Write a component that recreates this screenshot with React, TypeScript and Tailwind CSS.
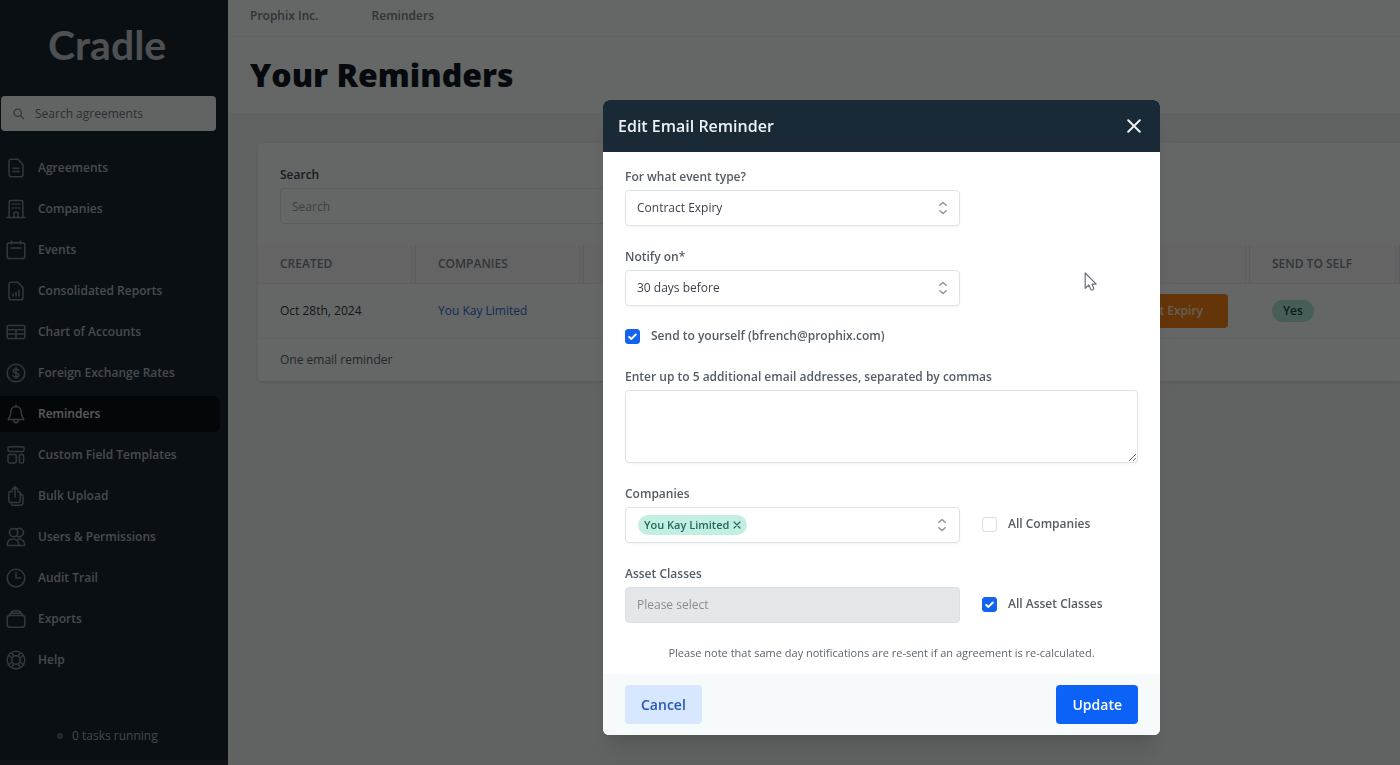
import { useState } from 'react'
import type { ReactNode } from 'react'

const icons: Record<string, ReactNode> = {
  agreements: (
    <>
      <path d="M3 3.4A2.2 2.2 0 0 1 5.2 1.2H12L17 6.8V16.4A2.4 2.4 0 0 1 14.6 18.8H5.2A2.2 2.2 0 0 1 3 16.6Z" />
      <path d="M7 10.2H13M7 13.4H13" />
    </>
  ),
  companies: (
    <>
      <path d="M3.2 18.5V3A1.6 1.6 0 0 1 4.800 1.4H15.2A1.6 1.6 0 0 1 16.8 3V18.5M1 18.6H19" />
      <path d="M8 18.5V14.2A1 1 0 0 1 9 13.2H11A1 1 0 0 1 12 14.2V18.5" />
      <path d="M6.5 5H7.5M9.5 5H10.5M12.5 5H13.5M6.5 9H7.5M12.5 9H13.5M9.5 9H10.5" />
    </>
  ),
  events: (
    <>
      <rect x="1.2" y="2.8" width="17.6" height="15.8" rx="2.4" />
      <path d="M5.5 1V4M14.5 1V4M5 8H15" />
    </>
  ),
  reports: (
    <>
      <path d="M3 3.4A2.2 2.2 0 0 1 5.2 1.2H12L17 6.8V16.4A2.4 2.4 0 0 1 14.6 18.8H5.2A2.2 2.2 0 0 1 3 16.6Z" />
      <path d="M7 15V13M10 15V11.5M13 15V9.5" />
    </>
  ),
  accounts: (
    <>
      <rect x="1.2" y="3.6" width="17.6" height="12.8" rx="1.4" />
      <path d="M1.2 7.8H18.8M1.2 12.1H18.8M10 7.8V16.4" />
    </>
  ),
  exchange: (
    <>
      <circle cx="10" cy="10" r="8.8" />
      <path d="M12.7 7.3C12.2 6.3 11.2 5.9 10 5.9C8.4 5.9 7.2 6.7 7.2 7.9C7.2 10.8 12.9 9.2 12.9 12.1C12.9 13.4 11.6 14.2 10 14.2C8.5 14.2 7.4 13.6 7 12.5M10 4.5V15.6" />
    </>
  ),
  reminders: (
    <>
      <path d="M10 2.6C6.8 2.6 4.7 5 4.7 8.2C4.7 12 3.5 13.2 2.2 15.4H17.8C16.5 13.2 15.3 12 15.3 8.2C15.3 5 13.2 2.6 10 2.6ZM10 2.6V1" />
      <path d="M7.6 15.6C7.6 17.6 8.6 18.8 10 18.8C11.4 18.8 12.4 17.6 12.4 15.6" />
    </>
  ),
  templates: (
    <>
      <rect x="2" y="1.8" width="16" height="4.6" rx="1.4" />
      <rect x="2" y="9.6" width="8.2" height="8.4" rx="1.4" />
      <rect x="13.4" y="9.6" width="4.2" height="8.4" rx="1.4" />
    </>
  ),
  upload: (
    <>
      <path d="M6.4 5.6H4.6A1.8 1.8 0 0 0 2.8 7.4V14.8A1.8 1.8 0 0 0 4.6 16.600H12.4A1.8 1.8 0 0 0 14.2 14.8V7.4A1.8 1.8 0 0 0 12.4 5.6H11.6" />
      <path d="M9 11V.8M6 3.8L9 .8L12 3.8M14.3 7.4L17 9.8V16.8A2.4 2.4 0 0 1 14.6 19.2H7A1.8 1.8 0 0 1 5.2 17.5" />
    </>
  ),
  users: (
    <>
      <circle cx="7.6" cy="5.6" r="4.2" />
      <path d="M11 2A4.2 4.2 0 1 1 11 9.2M1.2 18.4C1.2 14.4 3.5 12 7 12C10.6 12 12.8 14.4 12.8 18.4ZM12.2 12C16 11.6 18.8 14.2 18.8 18.4H12.8" />
    </>
  ),
  audit: (
    <>
      <circle cx="10" cy="10" r="8.8" />
      <path d="M10 4.6V10H14.4" />
    </>
  ),
  exports: (
    <>
      <rect x="1.2" y="6.6" width="17.6" height="11.6" rx="2.6" />
      <path d="M3 6.6C3.4 4.8 4.2 4.2 5.4 4.2H14.6C15.8 4.2 16.6 4.8 17 6.6M5.4 4.2C5.6 2.6 6.2 2 7.2 2H12.8C13.8 2 14.4 2.6 14.6 4.2" />
    </>
  ),
  help: (
    <>
      <circle cx="10" cy="10" r="8.8" />
      <circle cx="10" cy="10" r="4.2" />
      <path d="M5.4 2.6L8 6.2M2.6 5.4L6.2 8M14.6 2.6L12 6.2M17.4 5.4L13.8 8M5.4 17.4L8 13.8M2.6 14.6L6.2 12M14.6 17.4L12 13.8M17.4 14.6L13.8 12" />
    </>
  ),
}

const navItems = [
  { icon: 'agreements', label: 'Agreements' },
  { icon: 'companies', label: 'Companies' },
  { icon: 'events', label: 'Events' },
  { icon: 'reports', label: 'Consolidated Reports' },
  { icon: 'accounts', label: 'Chart of Accounts' },
  { icon: 'exchange', label: 'Foreign Exchange Rates' },
  { icon: 'reminders', label: 'Reminders', active: true },
  { icon: 'templates', label: 'Custom Field Templates' },
  { icon: 'upload', label: 'Bulk Upload' },
  { icon: 'users', label: 'Users & Permissions' },
  { icon: 'audit', label: 'Audit Trail' },
  { icon: 'exports', label: 'Exports' },
  { icon: 'help', label: 'Help' },
]

function NavIcon({ name }: { name: string }) {
  return (
    <svg
      viewBox="0 0 20 20"
      className="size-5 shrink-0 text-[#838c98]"
      fill="none"
      stroke="currentColor"
      strokeWidth="1.5"
      strokeLinecap="round"
      strokeLinejoin="round"
      aria-hidden="true"
    >
      {icons[name]}
    </svg>
  )
}

function Sidebar() {
  return (
    <aside className="flex w-[228px] shrink-0 flex-col border-b-[5px] border-[#2b3040] bg-[#1b2733]">
      <div className="flex h-24 items-center pb-2 pl-12 font-['Lato',sans-serif] text-[41px] leading-none font-bold text-[#c4c8cd]">
        Cradle
      </div>
      <label className="mr-3 ml-px flex h-[35px] items-center gap-[10px] rounded bg-[#f6f9fb] pl-3">
        <svg viewBox="0 0 14 14" className="size-3 text-[#7d8792]" fill="none" stroke="currentColor" strokeWidth="1.5" aria-hidden="true">
          <circle cx="5.5" cy="5.5" r="4.3" />
          <path d="M8.7 8.7L13 13" />
        </svg>
        <input
          type="search"
          aria-label="Search agreements"
          placeholder="Search agreements"
          className="min-w-0 flex-1 bg-transparent text-xs outline-none placeholder:text-[#6b7681]"
        />
      </label>
      <nav className="mt-[19px] mr-2 flex flex-col gap-[5px]">
        {navItems.map((item) => (
          <a
            key={item.label}
            href="#"
            className={
              item.active
                ? 'flex h-9 items-center gap-3 rounded-r-md bg-[#0a121b] pl-[6px] text-xs font-semibold text-[#e0e4e8]'
                : 'flex h-9 items-center gap-3 pl-[6px] text-xs font-semibold text-[#b3bac4]'
            }
          >
            <NavIcon name={item.icon} />
            {item.label}
          </a>
        ))}
      </nav>
      <div className="mt-auto flex items-center gap-[9px] pb-[14px] pl-[57px] text-xs leading-5 text-[#aab2bd]">
        <span className="size-[6px] rounded-full bg-[#5d6875]" />
        0 tasks running
      </div>
    </aside>
  )
}

function HeaderCell({ children }: { children?: ReactNode }) {
  return (
    <th className="h-[38px] border-b border-[#eff1f3] p-0 font-semibold">
      <div className="flex h-full items-center justify-between pl-[22px]">
        <span>{children}</span>
        <span className="h-full w-[5px] border-x border-[#e6e9ec]" />
      </div>
    </th>
  )
}

function RemindersPage() {
  return (
    <main className="min-w-0 flex-1 bg-[#f2f4f5]">
      <nav className="flex gap-[53px] border-b border-[#f2f4f6] bg-[#fdfefe] pt-2 pb-3 pl-[22px] text-xs leading-4 font-semibold text-[#7b828a]">
        <a href="#">Prophix Inc.</a>
        <a href="#">Reminders</a>
      </nav>
      <div className="bg-[#fdfefe] py-[18px] pl-[22px]">
        <h1 className="text-[32px] leading-10 font-extrabold text-[#111a24]">Your Reminders</h1>
      </div>
      <div className="pt-[30px] pl-[30px]">
        <section className="rounded-l bg-[#fdfefe] shadow">
          <div className="px-[22px] pt-[23px] pb-[21px]">
            <label htmlFor="search" className="mb-1 block text-xs leading-[18px] font-semibold text-[#3f4854]">
              Search
            </label>
            <input
              id="search"
              type="text"
              placeholder="Search"
              className="h-9 w-[335px] rounded border border-[#e2e5e9] bg-[#fdfefe] px-[11px] text-xs outline-none placeholder:text-[#98a1ab]"
            />
          </div>
          <table className="w-full table-fixed border-collapse text-left text-xs">
            <colgroup>
              <col className="w-[158px]" />
              <col className="w-[168px]" />
              <col />
              <col className="w-[150px]" />
            </colgroup>
            <thead className="bg-[#f9fafb] text-[#7b848e]">
              <tr>
                <HeaderCell>CREATED</HeaderCell>
                <HeaderCell>COMPANIES</HeaderCell>
                <HeaderCell />
                <HeaderCell>SEND TO SELF</HeaderCell>
              </tr>
            </thead>
            <tbody>
              <tr className="h-[55px] border-b border-[#f0f2f4] text-[#333b45]">
                <td className="pl-[22px]">Oct 28th, 2024</td>
                <td className="pl-[22px]">
                  <a href="#" className="text-[#2f70d6]">You Kay Limited</a>
                </td>
                <td className="pr-[22px] text-right">
                  <span className="inline-flex h-[34px] items-center rounded bg-[#fb8418] px-[25px] font-semibold text-[#ffe9d2]">
                    Contract Expiry
                  </span>
                </td>
                <td className="pl-[22px]">
                  <span className="inline-flex h-[22px] items-center rounded-full bg-[#b0ecd9] px-[11px] font-semibold text-[#24443f]">
                    Yes
                  </span>
                </td>
              </tr>
            </tbody>
          </table>
          <p className="px-[22px] py-3 text-xs leading-[18px] text-[#59616b]">One email reminder</p>
        </section>
      </div>
    </main>
  )
}

function SortArrows() {
  return (
    <svg viewBox="0 0 10 16" className="h-4 w-[10px] text-[#8d949d]" fill="none" stroke="currentColor" strokeWidth="1.5" strokeLinecap="round" strokeLinejoin="round" aria-hidden="true">
      <path d="M1.8 5.3L5 2.5L8.2 5.3M1.8 10.7L5 13.5L8.2 10.7" />
    </svg>
  )
}

function FieldLabel({ htmlFor, children }: { htmlFor: string; children: ReactNode }) {
  return (
    <label htmlFor={htmlFor} className="mb-1 block text-xs leading-[18px] font-semibold text-[#555c66]">
      {children}
    </label>
  )
}

function SelectField({ id, label, options }: { id: string; label: string; options: string[] }) {
  return (
    <div className="w-[335px] max-w-full">
      <FieldLabel htmlFor={id}>{label}</FieldLabel>
      <div className="relative">
        <select
          id={id}
          className="h-9 w-full appearance-none rounded border border-[#dfe2e8] bg-white px-[11px] text-xs text-[#3c434d] shadow-xs"
        >
          {options.map((option) => (
            <option key={option}>{option}</option>
          ))}
        </select>
        <span className="pointer-events-none absolute inset-y-0 right-3 flex items-center">
          <SortArrows />
        </span>
      </div>
    </div>
  )
}

function Checkbox({ id, label, initial = false }: { id: string; label: string; initial?: boolean }) {
  const [checked, setChecked] = useState(initial)

  return (
    <div className="flex h-5 items-center gap-[11px]">
      <span className="relative flex">
        <input
          id={id}
          type="checkbox"
          checked={checked}
          onChange={() => setChecked(!checked)}
          className="size-[15px] appearance-none rounded-[3px] border border-[#d9dde4] bg-white checked:border-[#1263f0] checked:bg-[#1263f0]"
        />
        {checked && (
          <svg viewBox="0 0 15 15" className="pointer-events-none absolute inset-0 size-[15px]" fill="none" stroke="white" strokeWidth="2" strokeLinecap="round" strokeLinejoin="round" aria-hidden="true">
            <path d="M4.2 7.9L6.4 9.9L10.8 5.5" />
          </svg>
        )}
      </span>
      <label htmlFor={id} className="text-xs leading-5 font-semibold text-[#555c66]">
        {label}
      </label>
    </div>
  )
}

function EditReminderDialog() {
  return (
    <div
      role="dialog"
      aria-modal="true"
      aria-labelledby="dialog-title"
      className="w-full max-w-[557px] overflow-hidden rounded-md bg-white shadow-xl"
    >
      <header className="flex h-[52px] items-center justify-between bg-[#1a2936] pr-[18px] pl-[15px]">
        <h2 id="dialog-title" className="text-base font-semibold text-[#eef2f6]">
          Edit Email Reminder
        </h2>
        <button type="button" aria-label="Close" className="p-px text-[#eef2f6]">
          <svg viewBox="0 0 14 14" className="size-[14px]" fill="none" stroke="currentColor" strokeWidth="2" strokeLinecap="round" aria-hidden="true">
            <path d="M1.2 1.2L12.8 12.8M12.8 1.2L1.2 12.8" />
          </svg>
        </button>
      </header>

      <div className="px-[22px] pt-4 pb-3">
        <SelectField id="event-type" label="For what event type?" options={['Contract Expiry']} />
        <div className="mt-[22px]">
          <SelectField id="notify-on" label="Notify on*" options={['30 days before']} />
        </div>
        <div className="mt-5">
          <Checkbox id="send-self" label="Send to yourself (bfrench@prophix.com)" initial />
        </div>
        <div className="mt-[22px]">
          <FieldLabel htmlFor="emails">Enter up to 5 additional email addresses, separated by commas</FieldLabel>
          <textarea
            id="emails"
            className="block h-[73px] w-full rounded border border-[#dfe2e8] px-[11px] py-2 text-xs shadow-xs outline-none"
          />
        </div>

        <div className="mt-[22px] flex items-end gap-[22px]">
          <div className="w-[335px]">
            <FieldLabel htmlFor="companies">Companies</FieldLabel>
            <div className="flex h-9 items-center rounded border border-[#dfe2e8] px-3 shadow-xs">
              <span className="flex h-5 items-center gap-1 rounded-full bg-[#c2efe2] px-[6px] text-[11px] font-semibold text-[#24665f]">
                You Kay Limited
                <button type="button" aria-label="Remove You Kay Limited">
                  <svg viewBox="0 0 8 8" className="size-2" fill="none" stroke="currentColor" strokeWidth="1.2" strokeLinecap="round" aria-hidden="true">
                    <path d="M1 1L7 7M7 1L1 7" />
                  </svg>
                </button>
              </span>
              <input id="companies" type="text" className="min-w-0 flex-1 bg-transparent text-xs outline-none" />
              <SortArrows />
            </div>
          </div>
          <div className="pb-[9px]">
            <Checkbox id="all-companies" label="All Companies" />
          </div>
        </div>

        <div className="mt-[22px] flex items-end gap-[22px]">
          <div className="w-[335px]">
            <FieldLabel htmlFor="asset-classes">Asset Classes</FieldLabel>
            <select
              id="asset-classes"
              disabled
              className="block h-9 w-full appearance-none rounded border border-[#dde0e3] bg-[#e4e7e9] px-[11px] text-xs text-[#868c93] opacity-100"
            >
              <option>Please select</option>
            </select>
          </div>
          <div className="pb-[9px]">
            <Checkbox id="all-asset-classes" label="All Asset Classes" initial />
          </div>
        </div>

        <p className="mt-[21px] text-center text-[11px] leading-[18px] text-[#5f666f]">
          Please note that same day notifications are re-sent if an agreement is re-calculated.
        </p>
      </div>

      <footer className="flex justify-between bg-[#f7fafb] px-[22px] py-[11px]">
        <button type="button" className="h-[39px] rounded bg-[#d6e7ff] px-4 text-sm font-semibold text-[#2457b8]">
          Cancel
        </button>
        <button type="button" className="h-[39px] rounded bg-[#0c62f6] px-4 text-sm font-semibold text-white">
          Update
        </button>
      </footer>
    </div>
  )
}

export default function App() {
  return (
    <div className="flex min-h-screen font-['Open_Sans','Noto_Sans',sans-serif]">
      <Sidebar />
      <RemindersPage />
      <div className="fixed inset-0 flex items-start justify-center overflow-hidden bg-black/60 pt-[100px] pl-[363px]">
        <EditReminderDialog />
      </div>
      <svg viewBox="0 0 13 20" className="pointer-events-none fixed top-[272px] left-[1084px] h-5 w-[13px]" fill="white" stroke="#6b6f78" strokeWidth="1.2" strokeLinejoin="round" aria-hidden="true">
        <path d="M1.2 1V16.4L4.8 13L7 17.6A1.7 1.7 0 0 0 9.8 16.2L8 12.2H12.2Z" />
      </svg>
    </div>
  )
}
